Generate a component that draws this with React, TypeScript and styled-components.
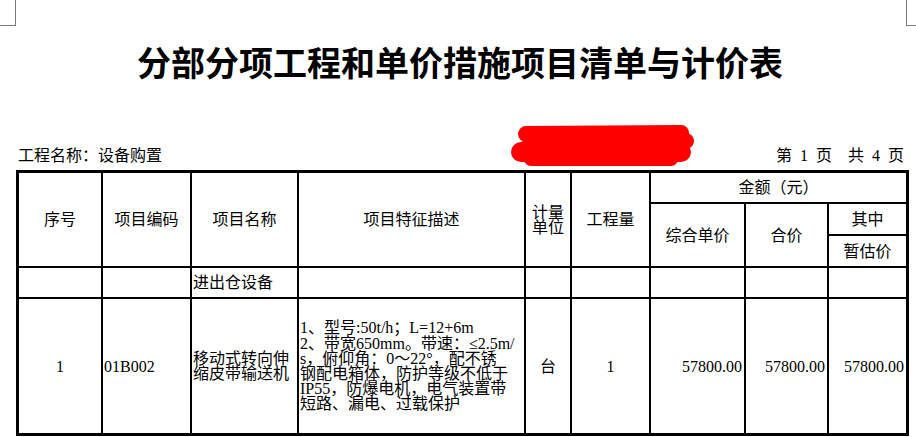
import React from "react";
import styled, { createGlobalStyle } from "styled-components";

const GlobalStyle = createGlobalStyle`
  html, body { margin: 0; padding: 0; background: #fff; }
  body {
    font-family: "Liberation Serif", "Noto Sans CJK SC", serif;
    color: #000;
  }
`;

const Page = styled.div`
  position: relative;
  width: 916px;
  height: 437px;
  overflow: hidden;
  background: #fff;
  display: flex;
  flex-direction: column;
`;

const CornerMark = styled.div<{ $side: "left" | "right" }>`
  position: absolute;
  top: 0;
  height: 25px;
  border-bottom: 1px solid #7a7a7a;
  ${(p) =>
    p.$side === "left"
      ? "left: 0; width: 15px; border-right: 1px solid #7a7a7a;"
      : "left: 906px; width: 10px; border-left: 1px solid #7a7a7a;"}
`;

const Redaction = styled.svg`
  position: absolute;
  left: 505px;
  top: 120px;
  width: 195px;
  height: 50px;
`;

const Title = styled.h1`
  margin: 45px 0 0;
  padding-left: 4px;
  text-align: center;
  font: 700 34px/34px "Noto Sans CJK SC", sans-serif;
  letter-spacing: 0;
`;

const InfoRow = styled.div`
  margin: 69px 0 0 16px;
  width: 893px;
  box-sizing: border-box;
  padding: 0 5px 0 2px;
  display: flex;
  justify-content: space-between;
  align-items: center;
  font-size: 16px;
  line-height: 16px;
  white-space: pre;
`;

const PageNo = styled.span`
  word-spacing: 4px;
`;

const Grid = styled.div`
  margin: 6px 0 0 16px;
  display: grid;
  grid-template-columns: 82px 87px 105px 225px 44px 77px 93px 81px 77px;
  grid-template-rows: 29px 30px 30px 29px 134px;
  gap: 2px;
  background: #000;
  border: 3px solid #000;
  width: max-content;
`;

type Align = "left" | "center" | "right";

const Cell = styled.div<{ $col: string; $row: string; $align?: Align }>`
  grid-column: ${(p) => p.$col};
  grid-row: ${(p) => p.$row};
  background: #fff;
  display: flex;
  align-items: center;
  justify-content: ${(p) =>
    p.$align === "left" ? "flex-start" : p.$align === "right" ? "flex-end" : "center"};
  text-align: ${(p) => p.$align ?? "center"};
  padding: 0 ${(p) => (p.$align === "right" ? "2px" : p.$align === "left" ? "1px" : "2px")};
  font-size: 16px;
  line-height: 15px;
  overflow: hidden;
`;

const Lines = styled.div`
  display: flex;
  flex-direction: column;
  line-height: 15.2px;
`;

const Line = styled.span`
  white-space: nowrap;
`;

const header: Array<[string, string, string]> = [
  ["序号", "1", "1 / 4"],
  ["项目编码", "2", "1 / 4"],
  ["项目名称", "3", "1 / 4"],
  ["项目特征描述", "4", "1 / 4"],
  ["计量单位", "5", "1 / 4"],
  ["工程量", "6", "1 / 4"],
  ["金额（元）", "7 / 10", "1"],
  ["综合单价", "7", "2 / 4"],
  ["合价", "8", "2 / 4"],
  ["其中", "9", "2"],
  ["暂估价", "9", "3"],
];

const description = [
  "1、型号:50t/h；L=12+6m",
  "2、带宽650mm。带速：≤2.5m/",
  "s，俯仰角：0～22°，配不锈",
  "钢配电箱体，防护等级不低于",
  "IP55，防爆电机，电气装置带",
  "短路、漏电、过载保护",
];

export default function App() {
  return (
    <>
      <GlobalStyle />
      <Page>
        <CornerMark $side="left" />
        <CornerMark $side="right" />
        <Redaction viewBox="0 0 195 50">
          <g stroke="#ff0000" strokeLinecap="round" fill="none">
            <line x1="21" y1="14" x2="176" y2="13" strokeWidth="16" />
            <line x1="25" y1="23" x2="181" y2="21" strokeWidth="16" />
            <line x1="16" y1="32" x2="176" y2="32" strokeWidth="20" />
            <line x1="26" y1="39" x2="166" y2="39" strokeWidth="14" />
          </g>
        </Redaction>

        <Title>分部分项工程和单价措施项目清单与计价表</Title>

        <InfoRow>
          <span>工程名称：设备购置</span>
          <PageNo>第 1 页  共 4 页</PageNo>
        </InfoRow>

        <Grid>
          {header.map(([text, col, row]) => (
            <Cell key={text} $col={col} $row={row}>
              {text}
            </Cell>
          ))}

          <Cell $col="1" $row="4" />
          <Cell $col="2" $row="4" />
          <Cell $col="3" $row="4" $align="left">进出仓设备</Cell>
          <Cell $col="4" $row="4" />
          <Cell $col="5" $row="4" />
          <Cell $col="6" $row="4" />
          <Cell $col="7" $row="4" />
          <Cell $col="8" $row="4" />
          <Cell $col="9" $row="4" />

          <Cell $col="1" $row="5">1</Cell>
          <Cell $col="2" $row="5" $align="left">01B002</Cell>
          <Cell $col="3" $row="5" $align="left">
            <Lines>
              <Line>移动式转向伸</Line>
              <Line>缩皮带输送机</Line>
            </Lines>
          </Cell>
          <Cell $col="4" $row="5" $align="left">
            <Lines>
              {description.map((l) => (
                <Line key={l}>{l}</Line>
              ))}
            </Lines>
          </Cell>
          <Cell $col="5" $row="5">台</Cell>
          <Cell $col="6" $row="5">1</Cell>
          <Cell $col="7" $row="5" $align="right">57800.00</Cell>
          <Cell $col="8" $row="5" $align="right">57800.00</Cell>
          <Cell $col="9" $row="5" $align="right">57800.00</Cell>
        </Grid>
      </Page>
    </>
  );
}
